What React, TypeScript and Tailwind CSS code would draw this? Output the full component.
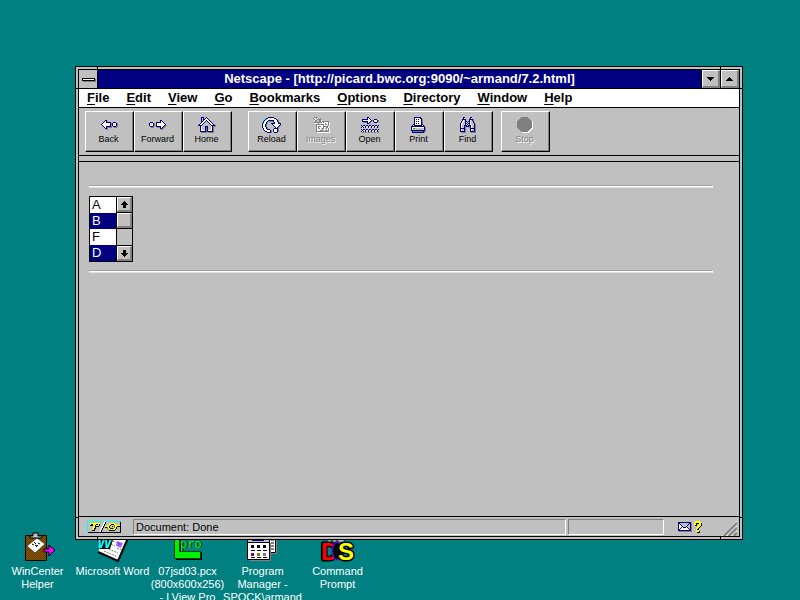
import type { ReactNode } from "react";

const INK: Record<string, string> = {
  N: "#000080",
  W: "#ffffff",
  s: "#808080",
  K: "#000000",
  L: "#c0c0c0",
  C: "#00ffff",
  Y: "#ffff00",
  O: "#808000",
  G: "#00c000",
  M: "#ff00ff",
};

function Bitmap({ rows, className = "" }: { rows: string[]; className?: string }) {
  const width = Math.max(...rows.map((r) => r.length));
  const paths: Record<string, string> = {};
  rows.forEach((row, y) =>
    [...row].forEach((ch, x) => {
      if (INK[ch]) paths[ch] = (paths[ch] ?? "") + `M${x} ${y}h1v1h-1z`;
    }),
  );
  return (
    <svg width={width} height={rows.length} viewBox={`0 0 ${width} ${rows.length}`} shapeRendering="crispEdges" className={className} aria-hidden="true">
      {Object.entries(paths).map(([ch, d]) => (
        <path key={ch} d={d} fill={INK[ch]} />
      ))}
    </svg>
  );
}

const BACK = [
  ".....NN...........",
  "....NWNs..........",
  "...NWWNNNNN..NNN..",
  "..NWWWWWWWNsNWWWNs",
  ".NWWWWWWWWNsNWLWNs",
  "..NWWWWWWWNsNWWWNs",
  "...NWWNNNNNs.NNNss",
  "....NWNsssss..sss.",
  ".....NNs..........",
  "......ss..........",
];
const FORWARD = [
  "...........NN.....",
  "...........NWN....",
  ".NNN...NNNNNWWN...",
  "NWWWNs.NWWWWWWWN..",
  "NWLWNs.NWWWWWWWWN.",
  "NWWWNs.NWWWWWWWNss",
  ".NNNss.NNNNNWWNss.",
  "..sss...sssNWNss..",
  "...........NNss...",
  "............ss....",
];
const HOME = [
  "...NNN..N.........",
  "...NLN.NWN........",
  "...NLNNWWWN.......",
  "...NLNWWNWWN......",
  "...NNWWNLNWWN.....",
  "...NWWNLLLNWWN....",
  "..NWWNLLLLLNWWN...",
  ".NWWNLLLLLLLNWWNs.",
  "NNNNLLLLLLLLLNNNNs",
  "..NWLLLNNNLLLWNsss",
  "..NWLLLNsNLLLWNs..",
  "..NWLLLNsNLLLWNs..",
  "..NWLLLNsNLLLWNs..",
  "..NWWWWNsNWWWWNs..",
  "..NNNNNNsNNNNNNs..",
  "...ssssss.ssssss..",
];
const RELOAD = [
  "......NNNNNN......",
  "....NNWWWWWWNN....",
  "...NCWWWWWWWWWNs..",
  "..NCWWNNNNNNWWWNs.",
  ".NCWWNsssssNWWWNs.",
  ".NWWNs.....sNWWWNs",
  "NCWWNs...NNNNWWWNNN",
  "NWWNs.....NWWWWWWWN",
  "NWWNs......NWWWWWNs",
  "NWWNs.......NWWWNs",
  "NWWWNs.......NWNs.",
  ".NWWNs......NNNNs.",
  ".NWWWNNN...NWWWNs.",
  "..NWWWWWNs.NWWWNs.",
  "...NNWWWNs.NWWWNs.",
  ".....NNNNs..NNNs..",
];
const IMAGES = [
  "..sss.............",
  ".sWWsW..s.........",
  "..sWWssss.........",
  "..WssLLssW........",
  "...sLLLssWsssssss.",
  "..ssssssssWsWWWWsW",
  "..WWWWsWWWWWWsWWsW",
  "....ssssssssWssWsW",
  "....sWWWWWWsWWWLsW",
  "....sWsssWWsssssW.",
  "....sWsWWWWsWWssW.",
  "....sWssWLssWLsWsW",
  "....sWWWWLLLWWLWsW",
  "....sWWLsssLWssLsW",
  "....sssssssssssssW",
  ".....WWWWWWWWWWWWW",
];
const OPEN = [
  "......NN..........",
  "......NWN.........",
  ".NNNNNNWWN...NNN..",
  ".NWWWWWWWWNsNWWWNs",
  ".NNNNNNWWNs.NWWWNs",
  "..ssssNWNs...NNNs.",
  "......NNs.........",
  "..................",
  "N.NN.NN.NN.NN.NN.N",
  ".N.WN.WN.WN.WN.WN.",
  "NWN.NW.NW.NW.NW.Ns",
  "..................",
  "N.NN.NN.NN.NN.NN.N",
  ".N.WN.WN.WN.WN.WN.",
  "NWN.NW.NW.NW.NW.Ns",
  ".ss.ss.ss.ss.ss.ss",
];
const PRINT = [
  "...NNNNNNN.....",
  "...NWWWWWNN....",
  "...NWNWNWWNs...",
  "...NWWWWWWNs...",
  "...NWNWNWWNs...",
  "...NWWWWWWNs...",
  "...NWNWNWWNs...",
  "..NNWWWWWWNN...",
  ".NWNNNNNNNNWN..",
  "NNNNNNNNNNNNNN.",
  "NWWWWWWWWWWWWNs",
  "NWGGLLLLLLLLLNs",
  "NWLLLLLLLLLLLNs",
  "NNNNNNNNNNNNNNs",
  ".NssssssssssNss",
  ".NNNNNNNNNNNNs.",
];
const FIND = [
  "...NN.....NN....",
  "...NW.....NW....",
  "..NNNN...NNNNs..",
  "..NWLN...NWLNs..",
  ".NWWLNN.NNWLLN..",
  ".NWLLNWNWNWLLNs.",
  "NWWLLNNLNNWLLLN.",
  "NWLLLNWNWNWLLLNs",
  "NWLLNNNLNNNWLLNs",
  "NWLLNsNNNsNWLLNs",
  "NWLLNs...sNWLLNs",
  "NNNNNs....NNNNNs",
  "NWLLNs....NWLLNs",
  "NWLLNs....NWLLNs",
  "NNNNNs....NNNNNs",
  ".sssss.....sssss",
];
const STOP = [
  ".....sssssss.....",
  "....sssssssss....",
  "...sssssssssss...",
  "..sssssssssssss..",
  ".sssssssssssssssW",
  ".sssssssssssssssW",
  ".sssssssssssssssW",
  ".sssssssssssssssW",
  ".sssssssssssssssW",
  ".sssssssssssssssW",
  ".sssssssssssssssW",
  "..sssssssssssssWW",
  "...sssssssssssWW.",
  "....sssssssssWW..",
  ".....sssssssWW...",
  "......WWWWWWW....",
];
const ARROW_UP = ["...K...", "..KKK..", ".KKKKK.", "KKKKKKK", "..KKK..", "..KKK..", "..KKK.."];
const ARROW_DOWN = [...ARROW_UP].reverse();
const MAXIMIZE = ["...K...", "..KKK..", ".KKKKK.", "KKKKKKK"];
const MINIMIZE = [...MAXIMIZE].reverse();
const ENVELOPE = [
  "NNNNNNNNNNNNN.",
  "NNLLLLLLLLLNNs",
  "NWNLLLLLLLNLNs",
  "NWWNLLLLLNLLNs",
  "NWWWNLLLNLLLNs",
  "NWWNWNNNWNLLNs",
  "NWNWWWWWWWNLNs",
  "NNWWWWWWWWWNNs",
  "NNNNNNNNNNNNNs",
  ".sssssssssssss",
];
const QUESTION = [
  ".YYYYY..",
  "YYYYYYY.",
  "YYKKKYYK",
  "YYK..YYK",
  ".KK.YYYK",
  "...YYYK.",
  "..YYYK..",
  "..YYK...",
  "...KK...",
  "..YYY...",
  "..YYYK..",
  "...KKK..",
];
const KEY = [
  "CCCCCCCCCCCCCCCCCWWCCCCCCCCCCCCCCC",
  "CCLLLLLLLLLLLLLLLWKLLLLLLLLLLLLLLK",
  "CLLYYYYYYYYYYLLLWWKLLLLYYYYYLLLLLK",
  "CLLYKKYYYKKYKLLLWKLLLLYYKKKYYLLLLK",
  "CLLKKKYYKYYYKLLWWKLLLYYKLLLOYYYYYK",
  "CLLLLLYYKKKKLLLWKLYYYYKLYKLOYYKKKK",
  "CLLLLLYYKLLLLLWWKLKKOYKLLLLOYKLLLK",
  "CLLLLYYKKLLLLLWKLLLLOYYKKKOYYKLLLK",
  "CLLLLYYKLLLLLWWKLLLLLOYYYYYYKLLLLK",
  "CLLLLKKKLLLLLWKLLLLLLLKKKKKKLLLLLK",
  "CLLLLLLLLLLLWWKLLLLLLLLLLLLLLLLLLK",
  "CKKKKKKKKKKKKKKKKKKKKKKKKKKKKKKKKK",
];

function Tool({ label, disabled, children }: { label: string; disabled?: boolean; children: ReactNode }) {
  return (
    <button
      type="button"
      disabled={disabled}
      className="flex h-[41px] w-[49px] flex-col items-center border border-t-white border-l-white border-r-black border-b-black bg-[#c0c0c0] pt-1 pr-0.5 text-[9px] leading-3 text-black shadow-[inset_-1px_-1px_0_#808080] disabled:text-[#808080] disabled:[text-shadow:1px_1px_0_#fff]"
    >
      <span className="flex h-[17px] items-center justify-center">{children}</span>
      <span>{label}</span>
    </button>
  );
}

function MenuItem({ label }: { label: string }) {
  return (
    <button type="button" className="px-2 text-[13px] leading-4 font-bold">
      <span className="underline underline-offset-2">{label[0]}</span>
      {label.slice(1)}
    </button>
  );
}

function Bevel({ label, className = "", children }: { label: string; className?: string; children?: ReactNode }) {
  return (
    <button
      type="button"
      aria-label={label}
      className={`flex shrink-0 items-center justify-center border-t border-l border-r-2 border-b-2 border-t-white border-l-white border-r-[#808080] border-b-[#808080] bg-[#c0c0c0] ${className}`}
    >
      {children}
    </button>
  );
}

function Rule() {
  return <hr className="h-[3px] border-0 border-t border-r border-b border-t-[#a0a0a0] border-r-white border-b-[#e0e0e0] bg-white" />;
}

function FrameNotches() {
  return (
    <div aria-hidden="true">
      <i className="absolute top-0 left-[21px] h-[3px] w-px bg-black" />
      <i className="absolute top-0 right-[21px] h-[3px] w-px bg-black" />
      <i className="absolute bottom-0 left-[21px] h-[3px] w-px bg-black" />
      <i className="absolute right-[21px] bottom-0 h-[3px] w-px bg-black" />
      <i className="absolute top-[21px] left-0 h-px w-[3px] bg-black" />
      <i className="absolute top-[21px] right-0 h-px w-[3px] bg-black" />
      <i className="absolute bottom-[21px] left-0 h-px w-[3px] bg-black" />
      <i className="absolute right-0 bottom-[21px] h-px w-[3px] bg-black" />
    </div>
  );
}

function ListBox() {
  return (
    <div className="flex h-[66px] w-11 border border-black">
      <select
        multiple
        size={4}
        aria-label="Letters"
        defaultValue={["B", "D"]}
        className="h-16 w-[26px] appearance-none overflow-hidden rounded-none border-0 bg-white p-0 text-[13px] outline-none"
      >
        {["A", "B", "F", "D"].map((v) => (
          <option
            key={v}
            value={v}
            className="h-4 min-h-4 p-0 pl-0.5 leading-4 checked:bg-[linear-gradient(#000080,#000080)] checked:[-webkit-text-fill-color:white]"
          >
            {v}
          </option>
        ))}
      </select>
      <div className="flex w-4 flex-col border-l border-black">
        <Bevel label="Scroll up" className="h-[15px]">
          <Bitmap rows={ARROW_UP} />
        </Bevel>
        <div className="flex flex-1 flex-col border-y border-black">
          <Bevel label="Scroll position" className="h-[15px]" />
          <div className="border-t border-black" />
        </div>
        <Bevel label="Scroll down" className="h-[15px]">
          <Bitmap rows={ARROW_DOWN} />
        </Bevel>
      </div>
    </div>
  );
}

function DesktopIcon({ lines, children }: { lines: string[]; children: ReactNode }) {
  return (
    <button type="button" className="flex w-[75px] shrink-0 flex-col items-center text-[11px] leading-[13px] text-white">
      <svg width="35" height="32" viewBox="0 0 35 32" className="mb-[3px] shrink-0" aria-hidden="true">
        {children}
      </svg>
      {lines.map((l) => (
        <span key={l} className="whitespace-nowrap">
          {l}
        </span>
      ))}
    </button>
  );
}

function Desktop() {
  return (
    <nav aria-label="Desktop" className="absolute top-[530px] left-0 flex items-start">
      <DesktopIcon lines={["WinCenter", "Helper"]}>
        <defs>
          <pattern id="board" width="2" height="2" patternUnits="userSpaceOnUse">
            <path d="M0 0h2v2H0z" fill="#803000" />
            <path d="M0 0h1v1H0zM1 1h1v1H1z" fill="#706000" />
          </pattern>
        </defs>
        <path d="M5.500 5.500h21v25h-21z" fill="url(#board)" stroke="#000" />
        <path d="M7 16l10-8 8 6-10 9z" fill="#fff" stroke="#000" strokeWidth=".5" />
        <path d="M12 14l2 1M14 12l2 2M16 17l2-2M15 15l2 1M18 13l2 1" stroke="#000" />
        <path d="M10 8V6h3V3h5v3h4v2z" fill="#c0c0c0" stroke="#000" />
        <path d="M24 19h5v-4l6 5-6 6v-4h-5z" fill="#f0f" stroke="#000" />
      </DesktopIcon>
      <DesktopIcon lines={["Microsoft Word"]}>
        <path d="M3 22L12 2l21 6-10 23z" fill="#fff" />
        <path d="M33 8L23 31 3 22" fill="none" stroke="#000" strokeWidth="2" />
        <path d="M9 21l12 5M11 18l12 5M18 11l4 2M16 14l4 2M22 18l5 2" stroke="#808080" strokeDasharray="2 1" />
        <path d="M22 11l6 2-2 5-5-2z" fill="#8080ff" />
        <path d="M23 12l3 2-3 2z" fill="#f0f" />
        <path d="M2 10h16l-3 9H5z" fill="#000" />
        <text x="2" y="18" fontFamily="Liberation Sans, sans-serif" fontSize="16" fontWeight="700" fontStyle="italic" fill="#0ff">W</text>
      </DesktopIcon>
      <DesktopIcon lines={["07jsd03.pcx", "(800x600x256)", "- LView Pro"]}>
        <path d="M5 0v29h26v-8H10V0z" transform="translate(1 1)" />
        <path d="M4.500 0v28.500h26v-7h-21V0z" fill="#00f000" stroke="#004000" />
        <text x="11" y="18" fontFamily="DejaVu Sans Mono, monospace" fontSize="12" fontWeight="700" fill="#003000">pro</text>
        <text x="10" y="18" fontFamily="DejaVu Sans Mono, monospace" fontSize="12" fill="#00ff20" aria-hidden="true">pro</text>
      </DesktopIcon>
      <DesktopIcon lines={["Program", "Manager -", "SPOCK\\armand"]}>
        <path d="M7 1h25v23H7z" fill="#808080" />
        <path d="M6.500 .5h24v22h-24z" fill="#fff" stroke="#000" />
        <path d="M26 10h3M26 13h3M26 16h3M26 19h3" stroke="#000" />
        <path d="M4 13h22v18H4z" fill="#808080" />
        <path d="M2.500 8.500h22v21h-22z" fill="#fff" stroke="#000" />
        <path d="M3 9h21v3H3z" fill="#c0c0c0" />
        <path d="M7 9h12v2H7z" fill="#000080" />
        <path d="M2.500 12.500h22" stroke="#000" />
        <path d="M6 15h3v3H6zM12 15h3v3h-3zM18 15h3v3h-3z" />
        <path d="M6 20.500h4M12 20.500h4M18 20.500h4M6 27.500h4M12 27.500h4M18 27.500h4" stroke="#000" />
        <path d="M6 23h3v3H6z" fill="#800080" />
        <path d="M12 23h3v3h-3z" fill="#808000" />
        <path d="M18 23h3v3h-3z" fill="#808080" />
      </DesktopIcon>
      <DesktopIcon lines={["Command", "Prompt"]}>
        <defs>
          <pattern id="ring" width="2" height="2" patternUnits="userSpaceOnUse">
            <path d="M0 0h2v2H0z" fill="#0000ff" />
            <path d="M0 0h1v1H0zM1 1h1v1H1z" fill="#c000c0" />
          </pattern>
        </defs>
        <path d="M8 9h3v3H8zM13 9h3v3h-3zM18 9h6v3h-6z" fill="#c0c0c0" stroke="#000" strokeWidth=".5" />
        <g fontFamily="Liberation Sans, sans-serif" fontSize="24" fontWeight="700" strokeWidth="3" strokeLinejoin="round" paintOrder="stroke">
          <text x="1" y="30" fill="#f00" stroke="#000">D</text>
          <ellipse cx="17" cy="21" rx="4" ry="8" fill="#000" stroke="url(#ring)" />
          <text x="18" y="30" fill="#ff0" stroke="#000">S</text>
        </g>
      </DesktopIcon>
    </nav>
  );
}

export default function App() {
  return (
    <main className="relative h-screen overflow-hidden bg-[#008080] font-['Liberation_Sans',Arial,sans-serif] text-black">
      <Desktop />
      <section aria-label="Netscape" className="absolute top-[66px] right-[57px] bottom-[60px] left-[75px] flex flex-col border border-black bg-[#c0c0c0] p-0.5">
        <FrameNotches />
        <div className="flex min-h-0 flex-1 flex-col border border-black">
          <header className="flex h-[19px] shrink-0 border-b border-black bg-[#000080]">
            <button type="button" aria-label="Control menu" className="flex w-[19px] items-center justify-center border-r border-black bg-[#c0c0c0]">
              <span className="h-[3px] w-[13px] border border-black bg-white shadow-[1px_1px_0_#808080]" />
            </button>
            <h1 className="flex-1 text-center text-[13px] leading-[18px] font-bold whitespace-nowrap text-white">
              Netscape - [http://picard.bwc.org:9090/~armand/7.2.html]
            </h1>
            <div className="flex gap-px border-l border-black bg-black">
              <Bevel label="Minimize" className="w-[18px]">
                <Bitmap rows={MINIMIZE} />
              </Bevel>
              <Bevel label="Maximize" className="w-[18px]">
                <Bitmap rows={MAXIMIZE} />
              </Bevel>
            </div>
          </header>
          <nav aria-label="Menu" className="flex h-[19px] shrink-0 items-center gap-px border-b border-black bg-white">
            {["File", "Edit", "View", "Go", "Bookmarks", "Options", "Directory", "Window", "Help"].map((m) => (
              <MenuItem key={m} label={m} />
            ))}
          </nav>
          <div role="toolbar" aria-label="Navigation" className="flex h-12 shrink-0 border-b border-black px-1.5 pt-[3px]">
            <Tool label="Back"><Bitmap rows={BACK} /></Tool>
            <Tool label="Forward"><Bitmap rows={FORWARD} /></Tool>
            <Tool label="Home"><Bitmap rows={HOME} /></Tool>
            <div className="w-4" />
            <Tool label="Reload"><Bitmap rows={RELOAD} /></Tool>
            <Tool label="Images" disabled><Bitmap rows={IMAGES} /></Tool>
            <Tool label="Open"><Bitmap rows={OPEN} /></Tool>
            <Tool label="Print"><Bitmap rows={PRINT} /></Tool>
            <Tool label="Find"><Bitmap rows={FIND} /></Tool>
            <div className="w-2" />
            <Tool label="Stop" disabled><Bitmap rows={STOP} /></Tool>
          </div>
          <div className="h-1.5 shrink-0 border-b border-black" />
          <article className="flex min-h-0 flex-1 flex-col gap-2 pt-[23px] pr-[26px] pl-2.5">
            <Rule />
            <ListBox />
            <Rule />
          </article>
          <footer className="flex h-5 shrink-0 items-center border-t border-black pr-0.5 pl-2 text-[11px] leading-[14px]">
            <button type="button" aria-label="Document security">
              <Bitmap rows={KEY} />
            </button>
            <p className="ml-3 h-4 flex-1 border border-t-[#808080] border-r-white border-b-white border-l-[#808080] pl-0.5">Document: Done</p>
            <p className="ml-0.5 h-4 w-24 border border-t-[#808080] border-r-white border-b-white border-l-[#808080]" />
            <button type="button" aria-label="Mail" className="ml-3.5">
              <Bitmap rows={ENVELOPE} />
            </button>
            <button type="button" aria-label="Help" className="ml-0.5">
              <Bitmap rows={QUESTION} />
            </button>
            <svg width="15" height="15" viewBox="0 0 15 15" className="mt-1 ml-5" aria-hidden="true">
              <path d="M0 15L15 0M5 15L15 5M10 15l5-5" stroke="#fff" />
              <path d="M1.500 15L15 1.500M6.500 15L15 6.500M11.500 15l3.500-3.500" stroke="#808080" strokeWidth="2" />
            </svg>
          </footer>
        </div>
      </section>
    </main>
  );
}
